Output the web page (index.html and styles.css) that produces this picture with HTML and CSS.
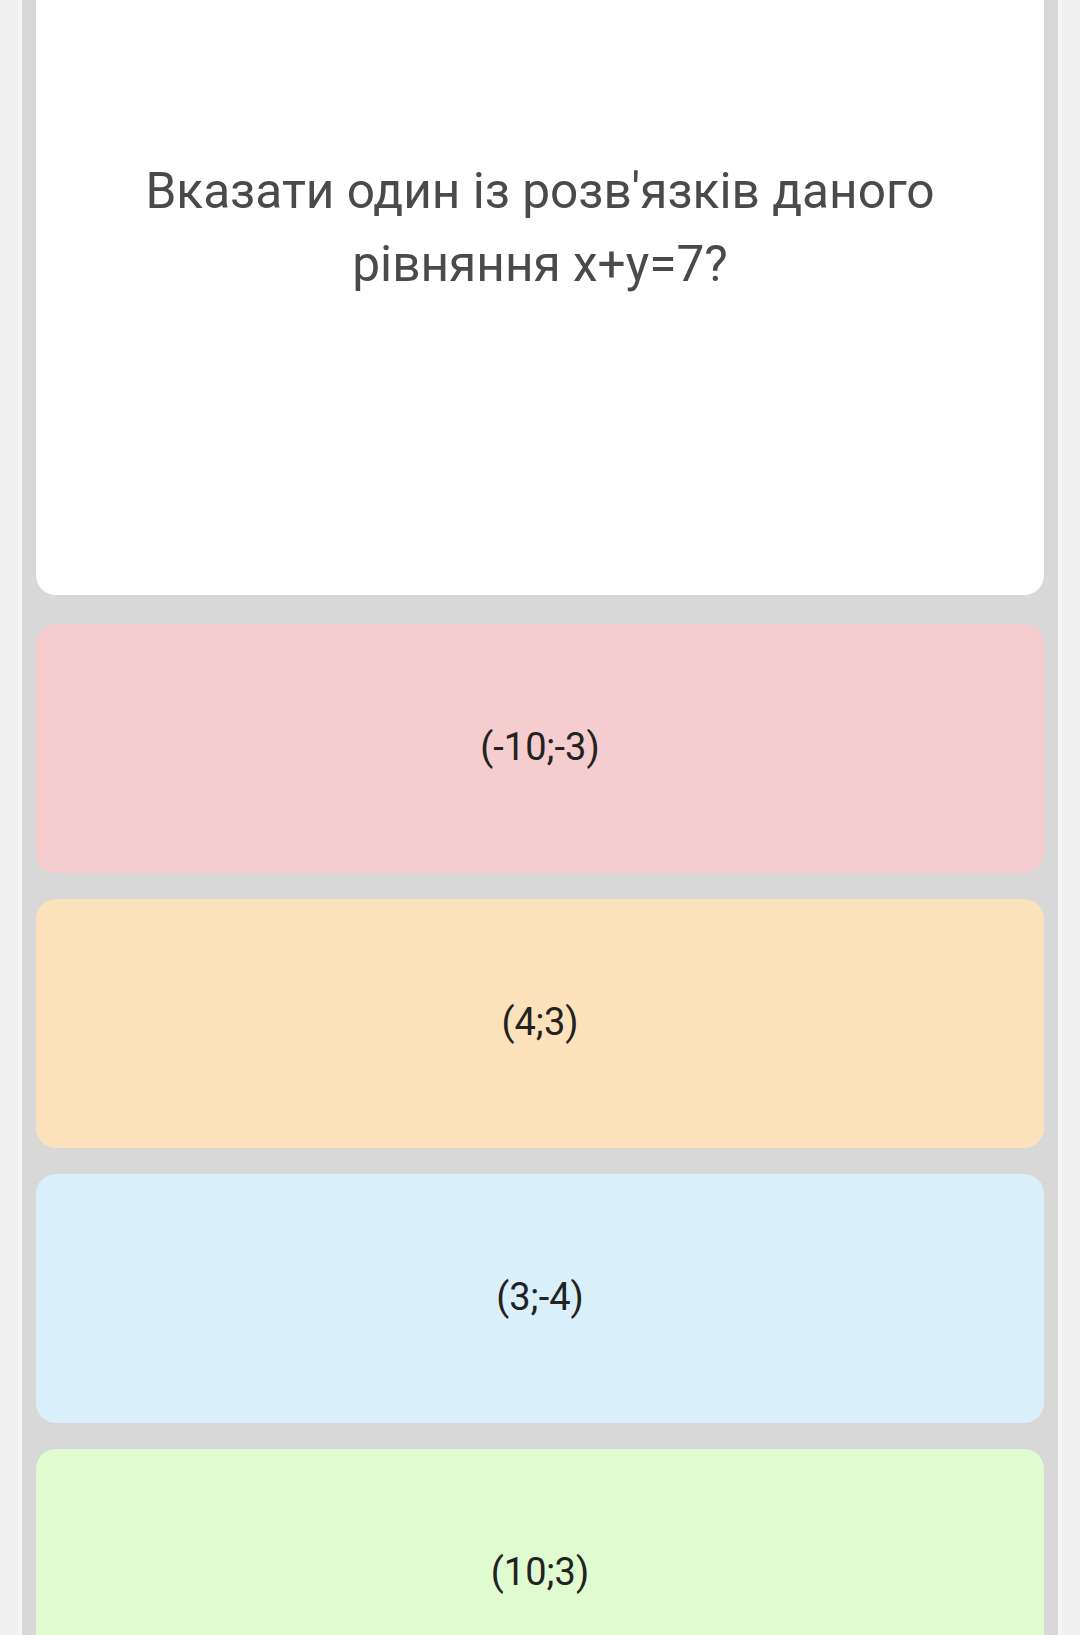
FILE: index.html
```html
<!DOCTYPE html>
<html lang="uk">
<head>
<meta charset="utf-8">
<link rel="stylesheet" href="styles.css">
</head>
<body>
<div class="frame">
  <main class="column">
    <section class="question">
      <p class="question-text">Вказати один із розв'язків даного рівняння x+y=7?</p>
    </section>
    <div class="answers">
      <div class="answer answer-red">(-10;-3)</div>
      <div class="answer answer-orange">(4;3)</div>
      <div class="answer answer-blue">(3;-4)</div>
      <div class="answer answer-green">(10;3)</div>
    </div>
  </main>
</div>
</body>
</html>
```
FILE: styles.css
```css
html, body {
  margin: 0;
  padding: 0;
  height: 1635px;
  overflow: hidden;
  background: #f0f0f0;
  font-family: Roboto, "Noto Sans", "Liberation Sans", sans-serif;
}
.frame {
  padding: 0 18px;
  background: #f0f0f0;
}
.column {
  border-left: 4px solid #f6f6f6;
  border-right: 4px solid #f6f6f6;
  background: #d8d8d8;
  padding: 0 14px;
  min-height: 1700px;
  display: flex;
  flex-direction: column;
  gap: 29px;
}
.question {
  height: 595px;
  box-sizing: border-box;
  background: #ffffff;
  border-radius: 0 0 20px 20px;
  padding: 155px 80px 0;
}
.question-text {
  margin: 0;
  text-align: center;
  font-size: 49.6px;
  line-height: 73px;
  color: #4a4a4a;
}
.answers {
  display: flex;
  flex-direction: column;
  gap: 26px;
}
.answer {
  height: 249px;
  box-sizing: border-box;
  padding-bottom: 4px;
  border-radius: 20px;
  display: flex;
  align-items: center;
  justify-content: center;
  font-size: 38px;
  color: #222222;
}
.answer-red { background: #f5cdce; }
.answer-orange { background: #fbe2bb; }
.answer-blue { background: #d9f0fa; }
.answer-green { background: #e0fbd0; }
```
